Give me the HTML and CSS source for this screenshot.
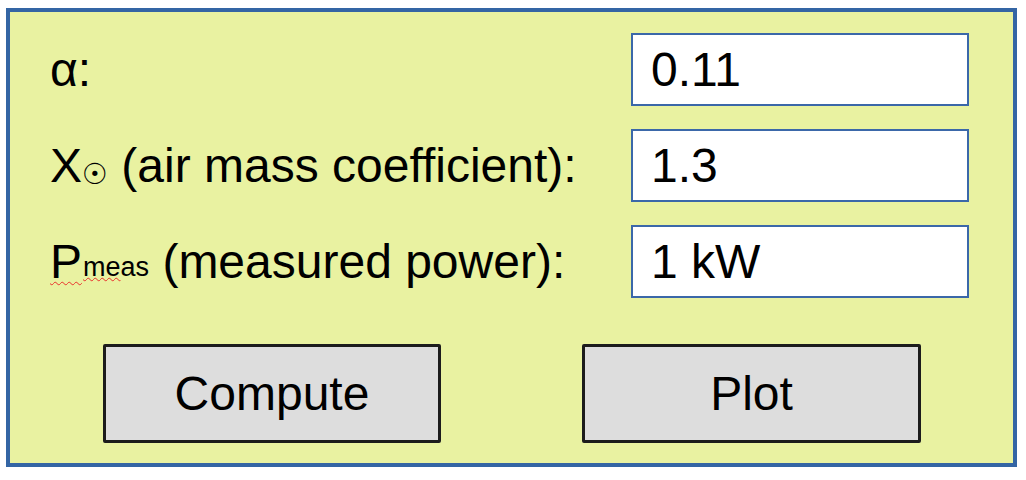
FILE: index.html
```html
<!DOCTYPE html>
<html>
<head>
<meta charset="utf-8">
<link rel="stylesheet" href="styles.css">
</head>
<body>
<div class="panel">
  <div class="rows">
    <div class="label">α:</div>
    <div class="field">0.11</div>
    <div class="label">X<span class="sun">☉</span> (air mass coefficient):</div>
    <div class="field">1.3</div>
    <div class="label"><span class="spell">P</span><span class="sub"><span class="spell">me</span>as</span> (measured power):</div>
    <div class="field">1 kW</div>
  </div>
  <div class="buttons">
    <div class="btn">Compute</div>
    <div class="btn">Plot</div>
  </div>
</div>
</body>
</html>
```

FILE: styles.css
```css
html, body {
  margin: 0;
  padding: 0;
  background: #ffffff;
}
body {
  font-family: "Liberation Sans", Arial, sans-serif;
  color: #000;
}
.panel {
  box-sizing: border-box;
  margin: 8px 0 0 6px;
  width: 1011px;
  height: 459px;
  border: 4px solid #3465a4;
  background: #e9f2a1;
  padding: 21px 44px 0 40px;
  display: flex;
  flex-direction: column;
}
.rows {
  display: grid;
  grid-template-columns: 1fr 338px;
  grid-auto-rows: 73px;
  row-gap: 23px;
}
.label {
  font-size: 48px;
  display: flex;
  align-items: center;
  white-space: pre;
}
.label > * {
  white-space: pre;
}
.field {
  box-sizing: border-box;
  background: #fff;
  border: 2px solid #3b68a9;
  font-size: 48px;
  padding-left: 18px;
  display: flex;
  align-items: center;
}
.sun {
  font-family: "DejaVu Sans", sans-serif;
  font-size: 29px;
  position: relative;
  top: 8px;
}
.sub {
  font-size: 27px;
  position: relative;
  top: 6px;
  margin-left: 1px;
}
.spell {
  text-decoration: underline wavy #e8322c;
  text-decoration-thickness: 1px;
  text-underline-offset: 3px;
}
.sub .spell {
  text-underline-offset: 1px;
}
.buttons {
  display: flex;
  gap: 141px;
  margin-top: 46px;
  padding-left: 53px;
}
.btn {
  box-sizing: border-box;
  width: 338px;
  height: 99px;
  background: #dddddd;
  border: 3px solid #1c1c1c;
  border-radius: 2px;
  font-size: 48px;
  display: flex;
  align-items: center;
  justify-content: center;
}
.btn + .btn {
  width: 339px;
}
```
